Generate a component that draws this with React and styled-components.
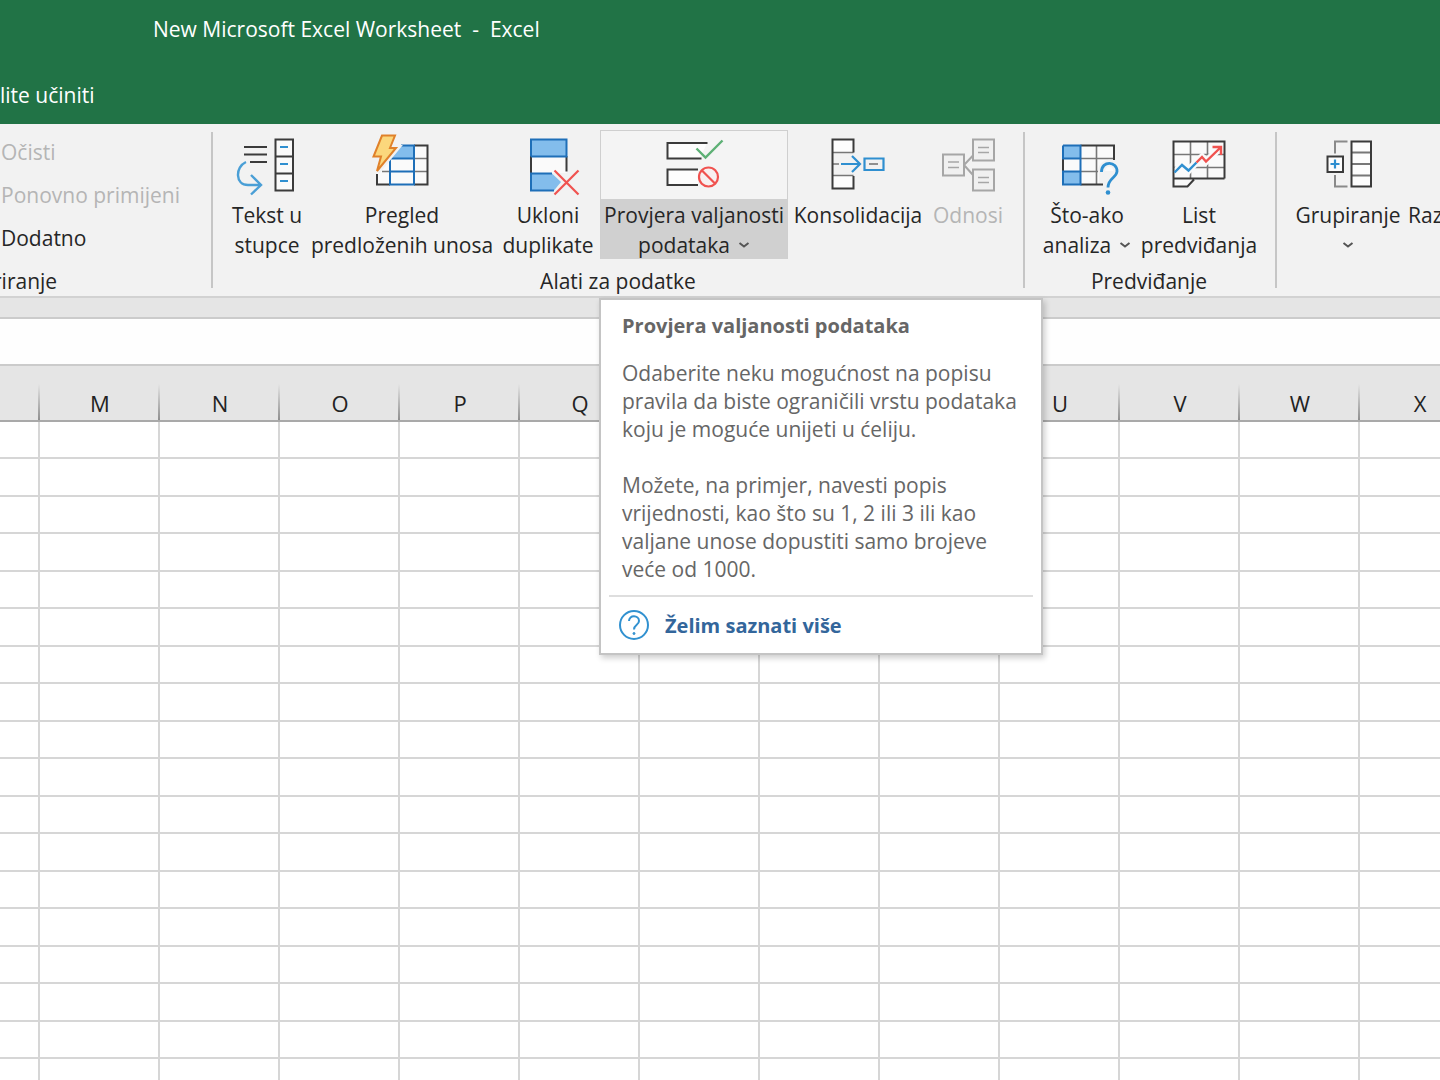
import React from "react";
import styled, { createGlobalStyle } from "styled-components";

const Global = createGlobalStyle`
  * { box-sizing: border-box; }
  body { margin: 0; background: #fff; }
  button, input { font: inherit; color: inherit; }
`;

const Page = styled.div`
  height: 100vh;
  overflow: hidden;
  display: flex;
  flex-direction: column;
  font-family: "Open Sans", "Noto Sans", sans-serif;
  font-size: 21px;
  line-height: 30px;
  color: #262626;
`;

const TitleArea = styled.header`
  flex: none;
  background: #217346;
  color: #fff;
`;

const TitleBar = styled.h1`
  margin: 0;
  padding: 14px 153px 22px;
  font-size: inherit;
  font-weight: 400;
  white-space: pre;
`;

const TabBar = styled.nav`
  display: flex;
  padding: 14px 0;
`;

const TellMe = styled.button`
  padding: 0;
  border: 0;
  background: none;
`;

const Ribbon = styled.section`
  flex: none;
  display: flex;
  height: 174px;
  padding-top: 6px;
  background: #f2f2f2;
  border-bottom: 2px solid #d2d2d2;
`;

const Group = styled.div`
  flex: none;
  display: flex;
  flex-direction: column;
  height: 166px;
  padding: 0 ${(p) => p.$right ?? 15}px 0 ${(p) => p.$left ?? 15}px;
`;

const Separator = styled.div`
  flex: none;
  width: 2px;
  height: 156px;
  margin-top: 2px;
  background: #c6c6c6;
`;

const Tools = styled.div`
  display: flex;
  gap: 2px;
  height: 129px;
`;

const GroupName = styled.div`
  height: 30px;
  margin-top: 7px;
  margin-left: ${(p) => p.$shift ?? 0}px;
  text-align: ${(p) => p.$align ?? "center"};
`;

const FilterList = styled.div`
  display: flex;
  flex-direction: column;
  align-items: flex-start;
  gap: 13px;
  width: 210px;
  height: 129px;
  padding-top: 7px;
`;

const FilterButton = styled.button`
  padding: 0;
  border: 0;
  background: none;
  color: ${(p) => (p.disabled ? "#b5b5b5" : "#262626")};
`;

const ToolSlot = styled.div`
  position: relative;
  flex: none;
  width: ${(p) => p.$w}px;
`;

const ToolButton = styled.button`
  display: flex;
  flex-direction: column;
  align-items: center;
  width: 100%;
  height: 129px;
  padding: 0;
  border: ${(p) => (p.$open ? "1px solid #cfcfcf" : "1px solid transparent")};
  border-bottom: 0;
  background: ${(p) => (p.$open ? "linear-gradient(#f4f4f4 68px, #d0d0d0 68px)" : "none")};
  color: ${(p) => (p.disabled ? "#b5b5b5" : "#262626")};
  white-space: nowrap;
`;

const IconBox = styled.svg`
  display: block;
  flex: none;
  width: 64px;
  height: 64px;
  margin: 1px 0 4px;
  fill: none;
`;

const Caption = styled.span`
  display: flex;
  flex: none;
  align-items: center;
  justify-content: center;
  gap: 8px;
  height: 30px;
`;

const Chevron = () => (
  <svg width="12" height="8" viewBox="0 0 12 8" fill="none" stroke="#555" strokeWidth="2">
    <path d="M1.5 2 L6 5.5 L10.5 2" />
  </svg>
);

const dark = "#3b3b3b";
const blue = "#2f8fd0";
const deep = "#1e6fb8";
const light = "#83bdec";
const red = "#f0524f";
const grey = "#777";

const icons = {
  columns: (
    <>
      <path d="M9 15H32M9 22.5H32M15 30H32" stroke={dark} strokeWidth="2" />
      <path d="M40.5 7.5H58V58.5H40.5ZM40.5 24.5H58M40.5 41.5H58" fill="#fafafa" stroke={dark} strokeWidth="2" />
      <path d="M45 15H53M45 32H53M45 49H53" stroke={blue} strokeWidth="2" />
      <path d="M11 30C0 35 0 53 13 53H26M16 43L26 53L16 62.5" stroke="#4a9fd6" strokeWidth="2.4" />
    </>
  ),
  flash: (
    <>
      <path d="M7 13H58V53H7Z" fill="#fafafa" />
      <path d="M31 13H44V26H20Z" fill={light} />
      <path d="M44 26.5H58M44 39.5H58M12 39.5H20" stroke={grey} strokeWidth="1.4" />
      <path d="M44 13.5H57.5V52.5H44M7 42V52.5H20" stroke={dark} strokeWidth="2" />
      <path d="M31 13.5H44V52.5H20V26.5H44M20 39.5H44" stroke={deep} strokeWidth="2" />
      <path d="M12 3H25.5L20.5 16H26.5L7 39.5L10.5 25H3.5Z" fill="#f2f2f2" stroke="#f2f2f2" strokeWidth="6" />
      <path d="M12 3.5H25L20 16H26L7 39L11 24.5H3.5Z" fill="#fbd77c" stroke="#e0812a" strokeWidth="2" />
    </>
  ),
  duplicates: (
    <>
      <path d="M15 24H51V41H15Z" fill="#fafafa" />
      <path d="M15 7.5H51V24.5H15Z" fill={light} />
      <path d="M15 41.5H36L45 50L38 58.5H15Z" fill={light} />
      <path d="M15 24V41M50.5 24V39.5" stroke={dark} strokeWidth="2" />
      <path d="M15 24.5V7.5H50.5V24.5H15M36 41.5H15V58.5H38" stroke={deep} strokeWidth="2" />
      <path d="M38.5 38.5L62.5 62.5M62.5 38.5L38.5 62.5" stroke={red} strokeWidth="2.2" />
    </>
  ),
  validation: (
    <>
      <path d="M5.5 11H45L38 26.5H5.5ZM5.5 37.5H36V53H5.5Z" fill="#fdfdfd" />
      <path d="M45.5 11H5.5V26.5H39.5M36 37.5H5.5V53H36" stroke={dark} strokeWidth="2" />
      <path d="M34.5 16.5L43.5 25.5L60.5 8.5" stroke="#5db075" strokeWidth="2.4" />
      <circle cx="46.5" cy="45" r="9.5" fill="#f8f0f0" stroke={red} strokeWidth="2.2" />
      <path d="M40 38.5L53 51.5" stroke={red} strokeWidth="2.2" />
    </>
  ),
  consolidate: (
    <>
      <path d="M6.5 7.5H27.5V20.5H6.5ZM6.5 43.5H27.5V56.5H6.5Z" fill="#fdfdfd" />
      <path d="M6.5 20.5H27.5M6.5 43.5H27.5M6.5 32H13" stroke={grey} strokeWidth="1.6" />
      <path d="M27.5 20.5V7.5H6.5V56.5H27.5V44" stroke={dark} strokeWidth="2" />
      <path d="M15 32H34M26 24L34 32L26 40M38.5 26.5H57.5V38H38.5Z" stroke={blue} strokeWidth="2.2" />
      <path d="M43 32H52" stroke={grey} strokeWidth="1.6" />
    </>
  ),
  relations: (
    <g stroke="#a6a6a6" strokeWidth="2">
      <path d="M28 33L37 23.5M28 33L37 43" />
      <path d="M7 22.5H28V43.5H7ZM37 7.5H58V28.5H37ZM37 37.5H58V58.5H37Z" fill="#f0f0f0" />
      <path d="M12 30H23M12 35.5H23M42 15.5H53M42 20.5H53M42 45.5H53M42 50.5H53" strokeWidth="1.6" />
    </g>
  ),
  whatIf: (
    <>
      <path d="M8 13.5H59V39H44V52.5H8Z" fill="#fafafa" />
      <path d="M8 13.5H25.5V26.5H8ZM8 39.5H25.5V52.5H8Z" fill={light} />
      <path d="M25 26.5H59M25 39.5H43M41.5 13.5V52.5" stroke={grey} strokeWidth="1.6" />
      <path d="M25.5 13.5H59V28M25.5 52.5H48M8 26V39" stroke={dark} strokeWidth="2" />
      <path d="M8 13.5H25.5V52.5H8V39.5H25.5M8 13.5V26.5H25.5" stroke={deep} strokeWidth="2" />
      <path d="M46.5 40C46.5 28 62.5 29 62 39.5C61.5 46 53 46 53 56" stroke="#f2f2f2" strokeWidth="7" />
      <path d="M46.5 40C46.5 28 62.5 29 62 39.5C61.5 46 53 46 53 55.5" stroke={blue} strokeWidth="2.8" />
      <circle cx="53" cy="60.5" r="2.3" fill={blue} />
    </>
  ),
  forecast: (
    <>
      <path d="M6.5 9.5H57.5V46.5H26L20.5 54.5H6.5Z" fill="#fafafa" />
      <path d="M6.5 22.5H57.5M6.5 35.5H57.5M23.5 9.5V46.5M40.5 9.5V46.5" stroke={grey} strokeWidth="1.6" />
      <path d="M8 40L15 33L21.5 38.5L29.5 30L35 25L39 29.5L54 15" stroke="#fafafa" strokeWidth="7" />
      <path d="M57.5 46.5H6.5M6.5 54.5V9.5H57.5V46.5M5.5 54.5H20.5L27 47.5" stroke={dark} strokeWidth="2" />
      <path d="M7.5 40.5L15 33L21.5 38.5L29.5 30.5" stroke={blue} strokeWidth="2.4" />
      <path d="M29.5 30.5L35 25L39 29.5L54 15M45.5 15H54V23" stroke={red} strokeWidth="2.4" />
    </>
  ),
  group: (
    <>
      <path d="M31.5 9.5H19V21.5M19 43V54.5H31.5" stroke="#8a8a8a" strokeWidth="2" />
      <path d="M35.5 9.5H55V54.5H35.5Z" fill="#fdfdfd" />
      <path d="M35.5 20.5H55M35.5 32H55M35.5 43.5H55" stroke={grey} strokeWidth="1.8" />
      <path d="M35.5 9.5H55V54.5H35.5Z" stroke={dark} strokeWidth="2" />
      <path d="M11.5 24.5H27V40H11.5Z" fill="#fdfdfd" stroke={dark} strokeWidth="2" />
      <path d="M14.5 32H23.5M19 27.5V36.5" stroke={blue} strokeWidth="2.2" />
    </>
  ),
};

function Tool({ width, icon, lines, menu, open, disabled, children }) {
  return (
    <ToolSlot $w={width}>
      <ToolButton type="button" $open={open} disabled={disabled} aria-expanded={menu ? !!open : undefined}>
        <IconBox viewBox="0 0 64 64" aria-hidden="true">
          {icons[icon]}
        </IconBox>
        {lines.map((line, i) => (
          <Caption key={i}>
            {line}
            {menu && i === lines.length - 1 && <Chevron />}
          </Caption>
        ))}
      </ToolButton>
      {children}
    </ToolSlot>
  );
}

const ClippedTool = styled.button`
  flex: none;
  align-self: flex-start;
  margin-top: 70px;
  padding: 0 4px;
  border: 0;
  background: none;
`;

const Tip = styled.div`
  position: absolute;
  z-index: 2;
  top: 168px;
  left: -1px;
  width: 444px;
  height: 357px;
  padding: 12px 8px 0;
  border: 2px solid #c4c4c4;
  background: #fff;
  box-shadow: 2px 3px 6px rgba(0, 0, 0, 0.2);
  color: #666;
  line-height: 28px;
`;

const TipTitle = styled.h2`
  margin: 0 13px 19px;
  font-size: 20px;
  font-weight: 700;
  white-space: nowrap;
`;

const TipText = styled.p`
  margin: 0 13px 28px;
  white-space: pre;
`;

const TipFoot = styled.div`
  margin-top: -16px;
  padding: 13px 9px;
  border-top: 2px solid #dedede;
`;

const TipLink = styled.a`
  display: flex;
  align-items: center;
  gap: 15px;
  height: 32px;
  color: #33669b;
  font-size: 20px;
  font-weight: 700;
  text-decoration: none;
`;

const FormulaBar = styled.div`
  flex: none;
  height: 68px;
  padding-top: 19px;
  background: #e5e5e5;
  border-bottom: 2px solid #cbcbcb;
`;

const FormulaInput = styled.input`
  display: block;
  width: 100%;
  height: 47px;
  padding: 0 8px;
  border: 0;
  border-top: 2px solid #cbcbcb;
  background: #fefefe;
`;

const Sheet = styled.table`
  flex: none;
  width: 1480px;
  table-layout: fixed;
  border-collapse: separate;
  border-spacing: 0;
`;

const FirstCol = styled.col`
  width: 40px;
`;

const ColumnHead = styled.th`
  height: 56px;
  padding: 21px 0 0;
  border-bottom: 2px solid #a9a9a9;
  background: linear-gradient(#e5e5e5, #8f8f8f) right 0 bottom 0 / 2px 36px no-repeat #e5e5e5;
  font-size: 22px;
  font-weight: 400;
  line-height: 33px;
  color: #222;
`;

const Row = styled.tr`
  height: 37px;
  &:nth-child(even) { height: 38px; }
`;

const Cell = styled.td`
  padding: 0;
  border-right: 2px solid #d6d6d6;
  border-bottom: 2px solid #d6d6d6;
`;

const columns = ["", "M", "N", "O", "P", "Q", "", "", "", "U", "V", "W", "X"];
const rows = Array.from({ length: 18 }, (_, i) => i);

export default function App() {
  return (
    <Page>
      <Global />
      <TitleArea>
        <TitleBar>{"New Microsoft Excel Worksheet  -  Excel"}</TitleBar>
        <TabBar>
          <TellMe type="button">lite učiniti</TellMe>
        </TabBar>
      </TitleArea>

      <Ribbon>
        <Group $left={1} $right={0}>
          <FilterList>
            <FilterButton type="button" disabled>Očisti</FilterButton>
            <FilterButton type="button" disabled>Ponovno primijeni</FilterButton>
            <FilterButton type="button">Dodatno</FilterButton>
          </FilterList>
          <GroupName $align="left" $shift={-8}>riranje</GroupName>
        </Group>
        <Separator />
        <Group>
          <Tools>
            <Tool width={78} icon="columns" lines={["Tekst u", "stupce"]} />
            <Tool width={188} icon="flash" lines={["Pregled", "predloženih unosa"]} />
            <Tool width={100} icon="duplicates" lines={["Ukloni", "duplikate"]} />
            <Tool width={188} icon="validation" lines={["Provjera valjanosti", "podataka"]} menu open>
              <Tip role="tooltip">
                <TipTitle>Provjera valjanosti podataka</TipTitle>
                <TipText>{"Odaberite neku mogućnost na popisu\npravila da biste ograničili vrstu podataka\nkoju je moguće unijeti u ćeliju."}</TipText>
                <TipText>{"Možete, na primjer, navesti popis\nvrijednosti, kao što su 1, 2 ili 3 ili kao\nvaljane unose dopustiti samo brojeve\nveće od 1000."}</TipText>
                <TipFoot>
                  <TipLink href="#help">
                    <svg width="32" height="32" viewBox="0 1 32 32" fill="none" stroke="#3191d0" strokeWidth="2" aria-hidden="true">
                      <circle cx="16" cy="16" r="14" />
                      <path d="M11 12C11 5.500 21 6 21 12C21 16 16 15.500 16 20.500" />
                      <circle cx="16" cy="24.500" r="1" fill="#3191d0" strokeWidth="1" />
                    </svg>
                    Želim saznati više
                  </TipLink>
                </TipFoot>
              </Tip>
            </Tool>
            <Tool width={136} icon="consolidate" lines={["Konsolidacija"]} />
            <Tool width={80} icon="relations" lines={["Odnosi"]} disabled />
          </Tools>
          <GroupName>Alati za podatke</GroupName>
        </Group>
        <Separator />
        <Group $left={13}>
          <Tools>
            <Tool width={98} icon="whatIf" lines={["Što-ako", "analiza"]} menu />
            <Tool width={122} icon="forecast" lines={["List", "predviđanja"]} />
          </Tools>
          <GroupName>Predviđanje</GroupName>
        </Group>
        <Separator />
        <Group $left={17} $right={0}>
          <Tools>
            <Tool width={108} icon="group" lines={["Grupiranje", ""]} menu />
            <ClippedTool type="button">Raz</ClippedTool>
          </Tools>
        </Group>
      </Ribbon>

      <FormulaBar>
        <FormulaInput type="text" aria-label="Formula" />
      </FormulaBar>

      <Sheet>
        <colgroup>
          <FirstCol />
          {columns.slice(1).map((c, i) => <col key={i} />)}
        </colgroup>
        <thead>
          <tr>
            {columns.map((c, i) => <ColumnHead key={i} scope="col">{c}</ColumnHead>)}
          </tr>
        </thead>
        <tbody>
          {rows.map((r) => (
            <Row key={r}>
              {columns.map((c, i) => <Cell key={i} />)}
            </Row>
          ))}
        </tbody>
      </Sheet>
    </Page>
  );
}
